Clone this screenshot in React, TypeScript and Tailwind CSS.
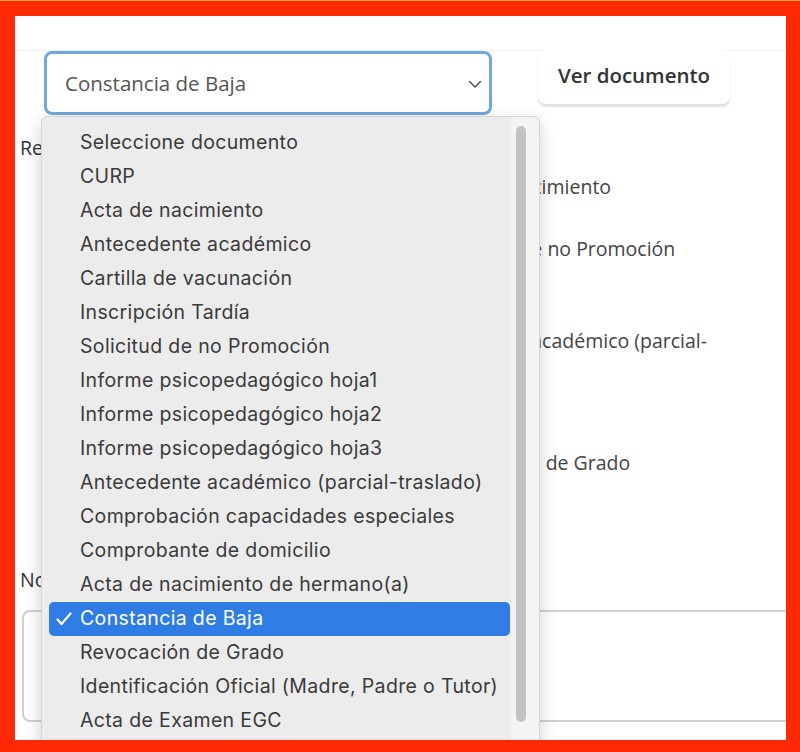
const opciones = [
  "Seleccione documento",
  "CURP",
  "Acta de nacimiento",
  "Antecedente académico",
  "Cartilla de vacunación",
  "Inscripción Tardía",
  "Solicitud de no Promoción",
  "Informe psicopedagógico hoja1",
  "Informe psicopedagógico hoja2",
  "Informe psicopedagógico hoja3",
  "Antecedente académico (parcial-traslado)",
  "Comprobación capacidades especiales",
  "Comprobante de domicilio",
  "Acta de nacimiento de hermano(a)",
  "Constancia de Baja",
  "Revocación de Grado",
  "Identificación Oficial (Madre, Padre o Tutor)",
  "Acta de Examen EGC",
];

const seleccionado = "Constancia de Baja";

const App = () => {
  return (
    <div className="w-[800px] h-[752px] bg-[#ff2a05] border-t border-[#f7a23c] pt-[15px] pl-[15px] pr-[14px]">
      <div className="relative w-[771px] h-[724px] bg-white overflow-hidden font-['Open_Sans',sans-serif] text-[#444]">
        <div className="h-[34px]" />
        <div className="border-t border-[#f0f0f0]">
          {/* selector + boton */}
          <div className="flex items-start pl-[29px]">
            <div className="flex items-center justify-between w-[448px] h-[64px] border-[3px] border-[#6ea8df] rounded-[8px] pl-[18px] pr-[7px] bg-white">
              <span className="text-[20.5px] text-[#555]">Constancia de Baja</span>
              <svg width="14" height="9" viewBox="0 0 14 9" className="mt-[2px]">
                <path d="M1.5 1.5 L7 7 L12.5 1.5" fill="none" stroke="#555" strokeWidth="1.6" strokeLinecap="round" strokeLinejoin="round" />
              </svg>
            </div>
            <button className="ml-[46px] -mt-px w-[192px] h-[54px] pb-[4px] rounded-[8px] bg-white shadow-[0_3px_2px_rgba(0,0,0,0.12)] text-[20.5px] font-semibold text-[#333]">
              Ver documento
            </button>
          </div>

          {/* requisitos */}
          <div className="pl-[5px] mt-[20px] text-[19.5px] leading-[26px] text-[#333]">Requisitos</div>
          <div className="ml-[422px] w-[300px] text-[19.5px] leading-[26px]">
            <div className="mt-[13px]">Acta de nacimiento</div>
            <div className="mt-[36px]">Solicitud de no Promoción</div>
            <div className="mt-[66px] -ml-[26px]">Antecedente académico (parcial-traslado)</div>
            <div className="mt-[70px] ml-px">Revocación de Grado</div>
          </div>

          {/* notas */}
          <div className="pl-[5px] mt-[91px] text-[19.5px] leading-[26px] text-[#333]">Notas</div>
          <div className="ml-[7px] mt-[17px] w-[820px] h-[112px] border-2 border-[#d0d0d0] rounded-[8px]" />
        </div>

        {/* menu desplegable */}
        <div className="absolute left-[26px] top-[100px] w-[499px] h-[680px] flex bg-[#ececec] border border-[#d4d4d4] rounded-[6px] shadow-[0_6px_18px_rgba(0,0,0,0.18)] font-['Inter',sans-serif]">
          <div className="flex-1 pl-[7px] pr-px pt-[9px]">
            {opciones.map((op) => {
              const activo = op === seleccionado;
              return (
                <div
                  key={op}
                  className={`flex items-center h-[34px] rounded-[5px] pl-[7px] text-[19.5px] tracking-[0.35px] ${
                    activo ? "bg-[#2f7de4] text-white" : "text-[#3a3a3a]"
                  }`}
                >
                  <span className="w-[24px] flex items-center">
                    {activo && (
                      <svg width="16" height="14" viewBox="0 0 16 14">
                        <path d="M1.5 7.5 L5.5 12 L14.5 1.5" fill="none" stroke="white" strokeWidth="2.2" strokeLinecap="round" strokeLinejoin="round" />
                      </svg>
                    )}
                  </span>
                  <span>{op}</span>
                </div>
              );
            })}
          </div>
          <div className="w-[28px] bg-[#f4f4f4] rounded-r-[6px] pt-[9px] pl-[5px]">
            <div className="w-[10px] h-[596px] rounded-full bg-[#c2c2c2]" />
          </div>
        </div>
      </div>
    </div>
  );
};

export default App;
